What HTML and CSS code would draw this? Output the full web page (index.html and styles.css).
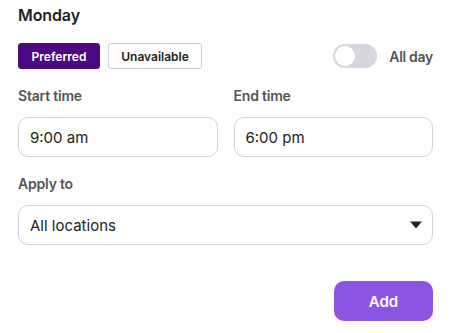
FILE: index.html
```html
<!DOCTYPE html>
<html>
<head>
<meta charset="utf-8">
<link rel="stylesheet" href="styles.css">
</head>
<body>
<div class="panel">
  <h2 class="title">Monday</h2>
  <div class="row-top">
    <div class="seg">
      <button class="btn-seg active">Preferred</button>
      <button class="btn-seg">Unavailable</button>
    </div>
    <label class="allday">
      <span class="toggle"><span class="knob"></span></span>
      <span class="allday-text">All day</span>
    </label>
  </div>
  <div class="times">
    <div class="field">
      <div class="label">Start time</div>
      <div class="input">9:00 am</div>
    </div>
    <div class="field">
      <div class="label">End time</div>
      <div class="input">6:00 pm</div>
    </div>
  </div>
  <div class="field apply">
    <div class="label">Apply to</div>
    <div class="input select">
      <span>All locations</span>
      <svg class="caret" width="12" height="8" viewBox="0 0 12 8"><path d="M0 0.5 H12 L6 7.5 Z" fill="#222"/></svg>
    </div>
  </div>
  <div class="actions">
    <button class="btn-add">Add</button>
  </div>
</div>
</body>
</html>
```
FILE: styles.css
```css
* { box-sizing: border-box; }
body {
  margin: 0;
  background: #fff;
  font-family: Inter, "Noto Sans", sans-serif;
  color: #222;
}
.panel {
  padding: 5px 28px 0 18px;
}
.title {
  margin: 0;
  font-size: 16px;
  line-height: 20px;
  font-weight: 600;
  color: #222;
  letter-spacing: -0.1px;
}
.row-top {
  margin-top: 18px;
  display: flex;
  justify-content: space-between;
  align-items: center;
  height: 26px;
}
.seg { display: flex; gap: 8px; }
.btn-seg {
  height: 26px;
  padding: 0 12px;
  border: 1px solid #cfcfcf;
  border-radius: 3px;
  background: #fff;
  color: #222;
  font-family: inherit;
  font-size: 12px;
  font-weight: 600;
}
.btn-seg.active {
  background: #4b0a7f;
  border-color: #4b0a7f;
  color: #fff;
  width: 82px;
  padding: 0;
}
.btn-seg:not(.active) { width: 94px; padding: 0; }
.allday {
  display: flex;
  align-items: center;
  gap: 12px;
}
.toggle {
  width: 44px;
  height: 24px;
  border-radius: 12px;
  background: #d6d5e0;
  padding: 2px;
  display: flex;
}
.knob {
  width: 20px;
  height: 20px;
  border-radius: 50%;
  background: #fff;
}
.allday-text {
  font-size: 14px;
  font-weight: 600;
  color: #555;
  letter-spacing: -0.3px;
}
.times {
  margin-top: 18px;
  display: grid;
  grid-template-columns: 1fr 1fr;
  column-gap: 16px;
}
.label {
  font-size: 14px;
  line-height: 18px;
  font-weight: 600;
  color: #555;
  letter-spacing: -0.2px;
}
.input {
  margin-top: 12px;
  height: 40px;
  border: 1px solid #d4d4d4;
  border-radius: 10px;
  padding: 0 11px;
  display: flex;
  align-items: center;
  font-size: 15px;
  color: #222;
}
.apply { margin-top: 18px; }
.select { justify-content: space-between; padding-right: 10px; }
.caret { display: block; }
.actions {
  margin-top: 36px;
  display: flex;
  justify-content: flex-end;
}
.btn-add {
  width: 99px;
  height: 40px;
  border: none;
  border-radius: 10px;
  background: #8c54e2;
  color: #fff;
  font-family: inherit;
  font-size: 15px;
  font-weight: 600;
}
```
